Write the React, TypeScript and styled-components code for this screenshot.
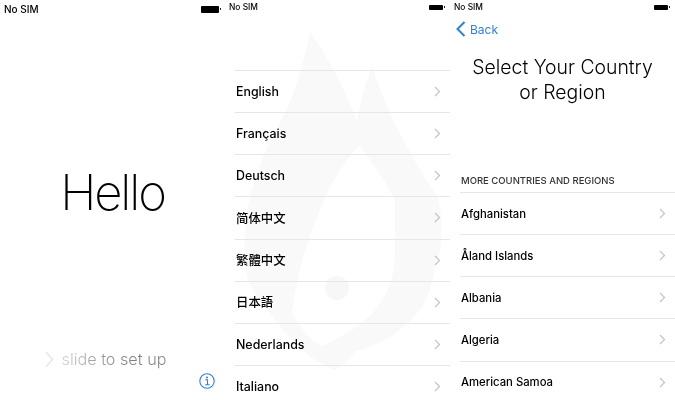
import React from 'react'
import styled, { createGlobalStyle } from 'styled-components'

const GlobalStyle = createGlobalStyle`
  html, body {
    margin: 0;
    padding: 0;
    background: #fff;
    overflow: hidden;
  }
  body {
    font-family: Inter, "Liberation Sans", "Noto Sans CJK SC", sans-serif;
  }
`

const Screens = styled.div`
  display: grid;
  grid-template-columns: 225px 225px 225px;
  width: 675px;
  height: 400px;
  overflow: hidden;
  opacity: 0.999;
`

const Screen = styled.section`
  position: relative;
  display: flex;
  flex-direction: column;
  height: 400px;
  overflow: hidden;
  background: #fff;
`

const StatusBar = styled.div<{ $large?: boolean }>`
  position: relative;
  display: flex;
  flex: none;
  align-items: center;
  justify-content: space-between;
  box-sizing: border-box;
  height: ${(p) => (p.$large ? '18px' : '14px')};
  padding: 0 ${(p) => (p.$large ? '6px' : '7px')} 0 4px;
  color: #000;
  font-size: ${(p) => (p.$large ? '10px' : '8.4px')};
  font-weight: 500;
`

const BatteryBody = styled.span<{ $large?: boolean }>`
  position: relative;
  display: block;
  width: ${(p) => (p.$large ? '18px' : '14px')};
  height: ${(p) => (p.$large ? '7px' : '5px')};
  border-radius: 1px;
  background: #000;

  &::after {
    content: '';
    position: absolute;
    top: 30%;
    right: -2px;
    width: 1px;
    height: 40%;
    background: #222;
  }
`

const HelloBody = styled.div`
  display: flex;
  flex: 1;
  flex-direction: column;
  align-items: center;
`

const Hello = styled.h1`
  margin: 150px 0 0;
  color: #000;
  font-size: 49px;
  line-height: 50px;
  font-weight: 200;
  letter-spacing: -2.1px;
`

const SlideRow = styled.div`
  display: flex;
  align-items: center;
  gap: 8px;
  margin: 131px 0 0 -14px;
  height: 20px;
`

const SlideText = styled.span`
  font-size: 16.2px;
  font-weight: 300;
  background: linear-gradient(90deg, #d0d0d0 0%, #a4a4a4 30%, #7e7e7e 60%, #888 100%);
  -webkit-background-clip: text;
  background-clip: text;
  color: transparent;
`

const InfoButton = styled.span`
  position: absolute;
  right: 10px;
  bottom: 11px;
  display: flex;
`

const Watermark = styled.svg`
  position: absolute;
  top: 0;
  left: 0;
  pointer-events: none;
`

const Spacer = styled.div<{ $height: number }>`
  flex: none;
  height: ${(p) => p.$height}px;
`

const List = styled.ul`
  position: relative;
  flex: none;
  margin: 0 0 0 10px;
  padding: 0;
  list-style: none;
  border-top: 1px solid #e6e6e6;
`

const Row = styled.li<{ $compact?: boolean }>`
  display: flex;
  align-items: center;
  justify-content: space-between;
  box-sizing: border-box;
  height: 42.15px;
  padding: 0 9px 0 1px;
  border-bottom: 1px solid #e6e6e6;
  color: #000;
  font-size: ${(p) => (p.$compact ? '11.3px' : '12.4px')};
  font-weight: 550;
`

const BackBar = styled.div`
  position: relative;
  display: flex;
  flex: none;
  align-items: center;
  gap: 4px;
  height: 30px;
  padding-left: 6px;
  color: #2f7fe0;
  font-size: 12px;
`

const Title = styled.h2`
  flex: none;
  margin: 11px 0 0;
  color: #000;
  font-size: 19.4px;
  line-height: 24.5px;
  font-weight: 300;
  text-align: center;
`

const SectionLabel = styled.div`
  flex: none;
  margin: 71px 0 0 11px;
  height: 17px;
  color: #333;
  font-size: 9.5px;
  line-height: 12px;
  font-weight: 500;
`

const Chevron: React.FC = () => (
  <svg width="7" height="11" viewBox="0 0 7 11" fill="none">
    <path d="M1 1l4.5 4.5L1 10" stroke="#c4c4c8" strokeWidth="1.2" />
  </svg>
)

const languages = ['English', 'Français', 'Deutsch', '简体中文', '繁體中文', '日本語', 'Nederlands', 'Italiano']
const countries = ['Afghanistan', 'Åland Islands', 'Albania', 'Algeria', 'American Samoa']

export default function App() {
  return (
    <Screens>
      <GlobalStyle />
      <Screen>
        <StatusBar $large>
          No SIM
          <BatteryBody $large />
        </StatusBar>
        <HelloBody>
          <Hello>Hello</Hello>
          <SlideRow>
            <svg width="9" height="17" viewBox="0 0 9 17" fill="none">
              <path d="M1 1l6.5 7.5L1 16" stroke="#e8e8e8" strokeWidth="1.8" />
            </svg>
            <SlideText>slide to set up</SlideText>
          </SlideRow>
        </HelloBody>
        <InfoButton>
          <svg width="16" height="16" viewBox="0 0 16 16" fill="none">
            <circle cx="8" cy="8" r="7.2" stroke="#2f7fd8" strokeWidth="1.1" />
            <circle cx="8" cy="4.4" r="1" fill="#2f7fd8" />
            <path d="M6.2 6.8H8.5V11.6M6.2 11.8h4.4" stroke="#2f7fd8" strokeWidth="1.1" />
          </svg>
        </InfoButton>
      </Screen>
      <Screen>
        <Watermark width="225" height="400" viewBox="225 0 225 400">
          <path
            d="M310 32C330 60 348 95 357 122C360 100 366 85 372 65C385 110 412 160 438 197C444 225 442 250 435 267C432 285 428 298 422 307C410 322 398 333 385 340C375 345 365 349 358 350C350 358 342 365 335 370C322 365 312 358 302 350C292 342 285 333 278 323C265 310 255 295 248 280C243 255 244 230 248 207C253 185 258 170 265 153C275 130 285 115 292 97C300 75 306 52 310 32Z"
            fill="#f9f9f9"
          />
          <path
            d="M359 145C342 165 326 190 318 215C305 245 296 280 292 313C300 328 310 340 322 346C332 342 342 336 352 330C375 315 395 290 395 255L395 200C388 185 372 162 359 145Z"
            fill="#fff"
          />
          <circle cx="337" cy="288" r="12" fill="#f7f7f7" />
        </Watermark>
        <StatusBar>
          No SIM
          <BatteryBody />
        </StatusBar>
        <Spacer $height={56} />
        <List>
          {languages.map((name) => (
            <Row key={name}>
              {name}
              <Chevron />
            </Row>
          ))}
        </List>
      </Screen>
      <Screen>
        <StatusBar>
          No SIM
          <BatteryBody />
        </StatusBar>
        <BackBar>
          <svg width="10" height="16" viewBox="0 0 10 16" fill="none">
            <path d="M8.5 1L1.5 8l7 7" stroke="#2f7fe0" strokeWidth="2" />
          </svg>
          Back
        </BackBar>
        <Title>
          Select Your Country
          <br />
          or Region
        </Title>
        <SectionLabel>MORE COUNTRIES AND REGIONS</SectionLabel>
        <List>
          {countries.map((name) => (
            <Row key={name} $compact>
              {name}
              <Chevron />
            </Row>
          ))}
        </List>
      </Screen>
    </Screens>
  )
}
